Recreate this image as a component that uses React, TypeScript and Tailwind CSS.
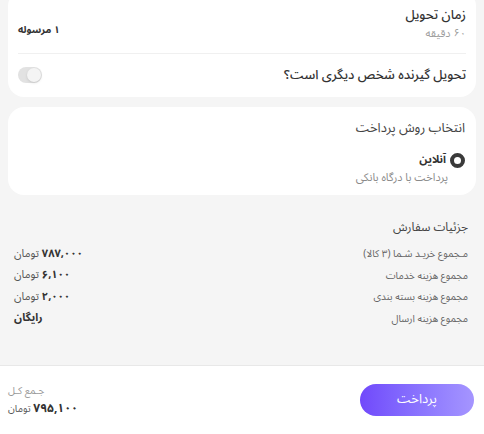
const rows = [
  { label: "مـجموع خریـد شـما (۳ کالا)", value: "۷۸۷,۰۰۰", unit: "تومان" },
  { label: "مجموع هزینه خدمات", value: "۶,۱۰۰", unit: "تومان" },
  { label: "مجموع هزینه بسته بندی", value: "۲,۰۰۰", unit: "تومان" },
  { label: "مجموع هزینه ارسال", value: "رایگان", unit: "" },
];

const App = () => {
  return (
    <div
      dir="rtl"
      className="flex h-[434px] w-full flex-col overflow-hidden bg-[#f5f5f5] text-[#333]"
      style={{ fontFamily: '"Noto Sans Arabic", "DejaVu Sans", sans-serif' }}
    >
      <div className="mx-2 -mt-[10px] rounded-2xl bg-white px-[10px] pt-[16px] pb-[12px]">
        <div className="flex items-end justify-between pb-[11px]">
          <div className="flex flex-col gap-[2px]">
            <div className="text-[13px] leading-[18px] font-medium">زمان تحویل</div>
            <div className="text-[11px] leading-[16px] text-[#9e9e9e]">۶۰ دقیقه</div>
          </div>
          <div className="mb-[3px] text-[10px] leading-[18px] font-bold">۱ مرسوله</div>
        </div>
        <div className="h-px bg-[#f0f0f0]" />
        <div className="flex items-center justify-between pt-[11px]">
          <span className="text-[13px] leading-[20px] font-medium">تحویل گیرنده شخص دیگری است؟</span>
          <div className="flex h-4 w-6 items-center justify-start rounded-full bg-[#e2e2e2] px-[1px]">
            <div className="h-[14px] w-[14px] rounded-full bg-[#f4f4f4] shadow-sm" />
          </div>
        </div>
      </div>

      <div className="mx-2 mt-[10px] rounded-2xl bg-white px-[11px] pt-[12px] pb-[9px]">
        <div className="text-[13px] leading-[18px] text-[#444]">انتخاب روش پرداخت</div>
        <div className="mt-[15px] flex items-center gap-[4px]">
          <div className="h-[15px] w-[15px] rounded-full border-[4px] border-[#3a3a3a] bg-white" />
          <span className="text-[11px] leading-[16px] font-bold">آنلاین</span>
        </div>
        <div className="mt-[2px] pr-[17px] text-[11px] leading-[16px] text-[#8a8a8a]">پرداخت با درگاه بانکی</div>
      </div>

      <div className="px-4 pt-[24px]">
        <div className="text-[12px] leading-[18px] text-[#444]">جزئیات سفارش</div>
        <div className="mt-[6px] flex flex-col">
          {rows.map((r) => (
            <div key={r.label} className="flex h-[21.5px] items-center justify-between">
              <span className="text-[10px] text-[#666]">{r.label}</span>
              <span className="-ml-[2px] text-[11px] text-[#555]">
                <b className="font-bold text-[#333]">{r.value}</b>
                {r.unit && " " + r.unit}
              </span>
            </div>
          ))}
        </div>
      </div>

      <div className="mt-auto flex h-[69px] items-center justify-between border-t border-[#e8e8e8] bg-white pr-[10px] pl-2">
        <button className="h-8 w-[114px] rounded-full bg-gradient-to-r from-[#7148fb] to-[#a595ff] text-[13px] text-white">
          پرداخت
        </button>
        <div className="flex flex-col items-end gap-[2px]">
          <div className="text-[10px] leading-[16px] text-[#999]">جـمع کـل</div>
          <div className="text-[10px] leading-[16px] text-[#555]">
            <b className="text-[12px] font-bold text-[#333]">۷۹۵,۱۰۰</b> تومان
          </div>
        </div>
      </div>
    </div>
  );
};

export default App;
